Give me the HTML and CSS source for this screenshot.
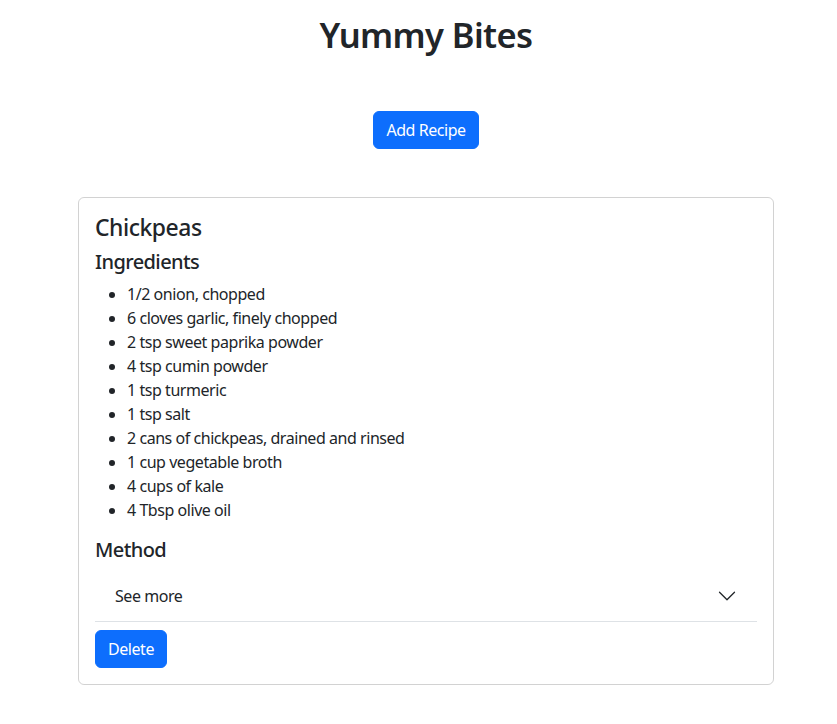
FILE: index.html
```html
<!DOCTYPE html>
<html lang="en">
<head>
<meta charset="utf-8">
<title>Yummy Bites</title>
<link rel="stylesheet" href="styles.css">
</head>
<body>
<div class="page">
  <h1 class="title">Yummy Bites</h1>
  <div class="actions">
    <button class="btn">Add Recipe</button>
  </div>
  <div class="card">
    <h4 class="card-title">Chickpeas</h4>
    <h5 class="section">Ingredients</h5>
    <ul class="ingredients">
      <li>1/2 onion, chopped</li>
      <li>6 cloves garlic, finely chopped</li>
      <li>2 tsp sweet paprika powder</li>
      <li>4 tsp cumin powder</li>
      <li>1 tsp turmeric</li>
      <li>1 tsp salt</li>
      <li>2 cans of chickpeas, drained and rinsed</li>
      <li>1 cup vegetable broth</li>
      <li>4 cups of kale</li>
      <li>4 Tbsp olive oil</li>
    </ul>
    <h5 class="section">Method</h5>
    <div class="accordion">
      <button class="accordion-btn">
        <span>See more</span>
        <svg class="chev" viewBox="0 0 16 16" width="20" height="20"><path fill="#212529" fill-rule="evenodd" d="M1.646 4.646a.5.5 0 0 1 .708 0L8 10.293l5.646-5.647a.5.5 0 0 1 .708.708l-6 6a.5.5 0 0 1-.708 0l-6-6a.5.5 0 0 1 0-.708z"/></svg>
      </button>
    </div>
    <div class="card-actions">
      <button class="btn">Delete</button>
    </div>
  </div>
</div>
</body>
</html>
```
FILE: styles.css
```css
* { box-sizing: border-box; }
html, body { margin: 0; padding: 0; background: #fff; }
body {
  font-family: "Noto Sans", "Open Sans", sans-serif;
  font-size: 16px;
  line-height: 24px;
  letter-spacing: -0.45px;
  color: #212529;
  padding-left: 15px;
}
.page {
  width: 696px;
  margin: 0 auto;
  padding-top: 14px;
}
.title {
  margin: 0;
  text-align: center;
  font-size: 34.5px;
  line-height: 41px;
  font-weight: 600;
  letter-spacing: -0.6px;
}
.actions {
  display: flex;
  justify-content: center;
  margin-top: 56px;
}
.btn {
  font-family: inherit;
  font-size: 16px;
  line-height: 24px;
  letter-spacing: -0.45px;
  padding: 6px 12px;
  color: #fff;
  background: #0d6efd;
  border: 1px solid #0d6efd;
  border-radius: 6px;
}
.card {
  margin-top: 48px;
  border: 1px solid rgba(0,0,0,.175);
  border-radius: 6px;
  padding: 16px;
}
.card-title {
  margin: 0 0 8px;
  font-size: 22.9px;
  line-height: 27.5px;
  font-weight: 500;
  letter-spacing: -0.45px;
}
.section {
  margin: 0 0 8px;
  font-size: 20px;
  line-height: 24px;
  font-weight: 500;
  letter-spacing: -0.6px;
}
.ingredients {
  margin: 0 0 16px;
  padding-left: 32px;
}
.accordion {
  border-bottom: 1px solid #dee2e6;
}
.accordion-btn {
  width: 100%;
  display: flex;
  align-items: center;
  justify-content: space-between;
  padding: 14px 20px 13px;
  font-family: inherit;
  font-size: 16px;
  line-height: 24px;
  letter-spacing: -0.45px;
  color: #212529;
  background: #fff;
  border: 0;
  text-align: left;
}
.chev { display: block; }
.card-actions {
  margin-top: 8px;
}
```
